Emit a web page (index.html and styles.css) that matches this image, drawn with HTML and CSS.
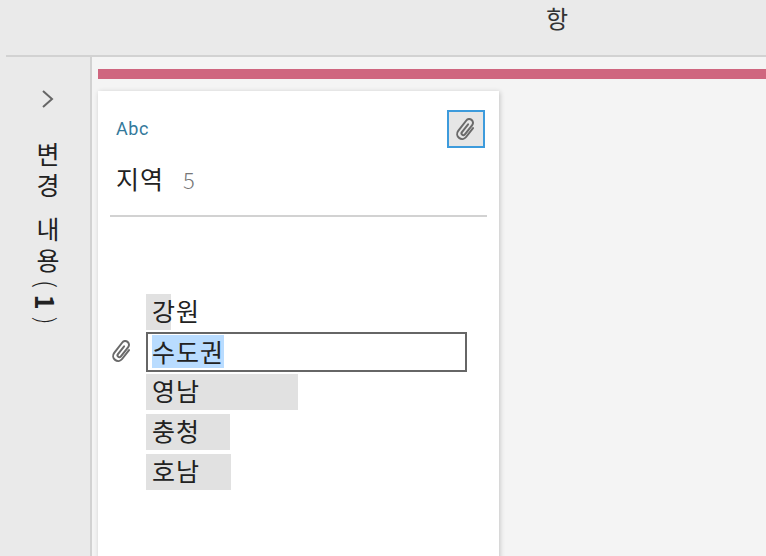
FILE: index.html
```html
<!DOCTYPE html>
<html lang="ko">
<head>
    <meta charset="UTF-8">
    <title>변경 내용</title>
    <link rel="stylesheet" href="styles.css">
</head>
<body>

    <!-- Top bar -->
    <div class="topbar">
        <div class="topbar-title">항</div>
    </div>

    <div class="content">
        <!-- Collapsed side panel -->
        <div class="sidebar">
            <svg class="chevron" width="14" height="20" viewBox="0 0 14 20">
                <path d="M2 2 L11 10 L2 18" fill="none" stroke="#666" stroke-width="2"/>
            </svg>
            <div class="sidebar-label"><span class="word">변경</span><span class="word">내용</span><span class="word count">(<b>1</b>)</span></div>
        </div>

        <!-- Main area -->
        <div class="main">
            <div class="accent"></div>
            <div class="card">
                <div class="card-head">
                    <span class="type">Abc</span>
                    <button class="clip-button">
                        <svg width="30" height="30" viewBox="0 0 24 24">
                            <path class="clip" d="M16 8 V17 a4 4 0 0 1 -8 0 V6.5 a3 3 0 0 1 6 0 V16 a1.5 1.5 0 0 1 -3 0 V8" transform="rotate(38 12 12)"/>
                        </svg>
                    </button>
                </div>
                <div class="field">
                    <span class="field-name">지역</span>
                    <span class="field-count">5</span>
                </div>
                <div class="divider"></div>

                <div class="values">
                    <div class="row">
                        <div class="value" style="--fill: 25px"><span>강원</span></div>
                    </div>
                    <div class="row row-active">
                        <svg class="row-clip" width="30" height="30" viewBox="0 0 24 24">
                            <path class="clip" d="M16 8 V17 a4 4 0 0 1 -8 0 V6.5 a3 3 0 0 1 6 0 V16 a1.5 1.5 0 0 1 -3 0 V8" transform="rotate(38 12 12)"/>
                        </svg>
                        <div class="value-edit"><span class="selected">수도권</span></div>
                    </div>
                    <div class="row">
                        <div class="value" style="--fill: 152px"><span>영남</span></div>
                    </div>
                    <div class="row">
                        <div class="value" style="--fill: 84px"><span>충청</span></div>
                    </div>
                    <div class="row">
                        <div class="value" style="--fill: 85px"><span>호남</span></div>
                    </div>
                </div>
            </div>
        </div>
    </div>

</body>
</html>
```

FILE: styles.css
```css
* {
    margin: 0;
    padding: 0;
    box-sizing: border-box;
    font-family: 'Noto Sans CJK KR', 'Noto Sans', sans-serif;
}

body {
    width: 766px;
    height: 556px;
    overflow: hidden;
    background: #eaeaea;
    color: #222;
}

/* Top bar */
.topbar {
    height: 57px;
    margin-left: 6px;
    border-bottom: 2px solid #d2d2d2;
}

.topbar-title {
    padding: 1px 0 0 540px;
    font-size: 24px;
    line-height: 34px;
    color: #333;
}

/* Layout under the bar */
.content {
    display: flex;
    height: 499px;
}

.sidebar {
    width: 92px;
    flex-shrink: 0;
    border-right: 2px solid #d2d2d2;
    display: flex;
    flex-direction: column;
    align-items: center;
    padding: 32px 0 0 6px;
}

.chevron {
    display: block;
    margin-left: -1px;
}

.sidebar-label {
    writing-mode: vertical-rl;
    margin-top: 33px;
    display: flex;
    gap: 13px;
    font-size: 25px;
    line-height: 24px;
    letter-spacing: 6px;
    color: #222;
}

.count {
    letter-spacing: 7px;
    margin: -12px 2px 0 -2px;
    font-weight: 300;
}

.count b {
    font-weight: 700;
}

/* Main area */
.main {
    flex: 1;
    background: #f4f4f4;
    padding: 12px 0 0 6px;
}

.accent {
    height: 10px;
    background: #cf667f;
}

.card {
    width: 401px;
    height: 480px;
    margin-top: 12px;
    background: #fff;
    box-shadow: 1px 1px 5px rgba(0, 0, 0, 0.2);
    padding: 19px 12px 0;
}

.card-head {
    display: flex;
    justify-content: space-between;
    align-items: center;
    padding-left: 6px;
    padding-right: 2px;
}

.type {
    font-family: Roboto, sans-serif;
    font-size: 18px;
    line-height: 22px;
    letter-spacing: 0.6px;
    color: #33799b;
}

.clip-button {
    width: 38px;
    height: 38px;
    background: #e6e6e6;
    border: 2px solid #3d9bdc;
    display: flex;
    justify-content: center;
    align-items: center;
}

.clip {
    fill: none;
    stroke: #6a6a6a;
    stroke-width: 1.6;
    stroke-linecap: round;
}

.field {
    display: flex;
    align-items: baseline;
    gap: 19px;
    padding: 12px 0 0 6px;
    height: 67px;
}

.field-name {
    font-size: 25px;
    line-height: 36px;
    letter-spacing: 1px;
}

.field-count {
    font-size: 22px;
    font-weight: 300;
    color: #777;
}

.divider {
    height: 2px;
    width: 377px;
    background: #d2d2d2;
}

/* Values */
.values {
    margin-top: 77px;
    margin-left: 36px;
    display: flex;
    flex-direction: column;
    gap: 4px;
}

.row {
    position: relative;
    height: 36px;
}

.row-active {
    height: 40px;
    margin: -2px 0;
}

.value {
    height: 36px;
    font-size: 25px;
    line-height: 32px;
    letter-spacing: 1px;
    padding-left: 6px;
    background: linear-gradient(#e1e1e1, #e1e1e1) no-repeat left top / var(--fill) 100%;
}

.row-clip {
    position: absolute;
    left: -39px;
    top: 4px;
}

.value-edit {
    width: 321px;
    height: 40px;
    border: 2px solid #666;
    padding: 1px 4px;
    font-size: 25px;
    line-height: 33px;
    letter-spacing: 1px;
}

.selected {
    display: inline-block;
    height: 33px;
    background: #b9dcff;
}
```
